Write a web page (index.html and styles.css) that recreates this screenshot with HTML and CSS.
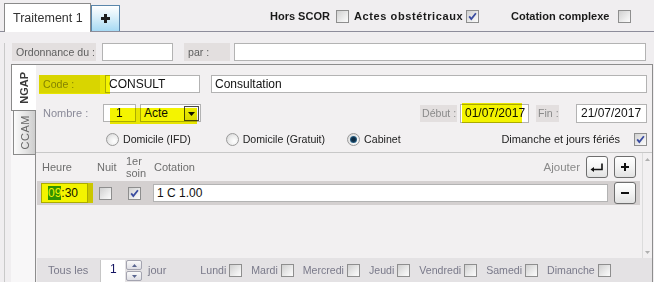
FILE: index.html
```html
<!DOCTYPE html>
<html lang="fr">
<head>
<meta charset="utf-8">
<title>Traitement</title>
<link rel="stylesheet" href="styles.css">
</head>
<body>
<div class="top">
  <div class="tab tab-active">Traitement 1</div>
  <div class="tab tab-add"><svg width="9" height="9" viewBox="0 0 9 9"><path d="M3 0h3v3h3v3H6v3H3V6H0V3h3z" fill="#1e1e1e"/></svg></div>
  <div class="opts">
    <span class="opt-l l1">Hors SCOR</span><span class="cb"></span>
    <span class="opt-l l2">Actes obstétricaux</span><span class="cb"><svg width="11" height="11" viewBox="0 0 11 11"><path d="M2.2 5.4l2.1 2.6 4.6-5.8" fill="none" stroke="#3a4ca0" stroke-width="1.8"/></svg></span>
    <span class="opt-l l3">Cotation complexe</span><span class="cb"></span>
  </div>
</div>
<div class="content">
  <div class="ordrow">
    <span class="lbox lb-ord">Ordonnance du :</span>
    <span class="field f-ord"></span>
    <span class="lbox lb-par">par :</span>
    <span class="field f-par"></span>
  </div>
  <div class="frame">
    <div class="vtabs">
      <div class="vtab ngap"><span>NGAP</span></div>
      <div class="vtab ccam"><span>CCAM</span></div>
    </div>
    <div class="panel">
      <div class="row r-code">
        <span class="lbox code-lbl">Code :</span>
        <span class="field f-code">CONSULT</span>
        <span class="field f-lib">Consultation</span>
        <span class="hl hl-code"></span>
      </div>
      <div class="row r-nb">
        <span class="lbl nb-lbl">Nombre :</span>
        <span class="field f-nb">1</span>
        <span class="field select">Acte<span class="dd"><svg width="7" height="4" viewBox="0 0 7 4"><path d="M0 0h7L3.5 4z" fill="#111"/></svg></span></span>
        <span class="lbox lb-deb">Début :</span>
        <span class="field f-date">01/07/2017</span>
        <span class="lbox lb-fin">Fin :</span>
        <span class="field f-date2">21/07/2017</span>
        <span class="hl hl-nb"></span>
        <span class="hl hl-deb"></span>
      </div>
      <div class="row r-rad">
        <span class="radio r1"></span><span class="rtxt">Domicile (IFD)</span>
        <span class="radio r2"></span><span class="rtxt">Domicile (Gratuit)</span>
        <span class="radio r3 on"><span class="dot"></span></span><span class="rtxt">Cabinet</span>
        <span class="rtxt dim">Dimanche et jours fériés</span>
        <span class="cb cb-dim"><svg width="11" height="11" viewBox="0 0 11 11"><path d="M2.2 5.4l2.1 2.6 4.6-5.8" fill="none" stroke="#3a4ca0" stroke-width="1.8"/></svg></span>
      </div>
      <div class="sep"></div>
      <div class="grid">
        <div class="gmain">
          <div class="ghead">
            <span class="h-heure">Heure</span>
            <span class="h-nuit">Nuit</span>
            <span class="h-soin">1er<br>soin</span>
            <span class="h-cot">Cotation</span>
            <span class="ajouter">Ajouter</span>
            <span class="btn b-enter"><svg width="20" height="20" viewBox="0 0 20 20"><path d="M15 6.5v6H6" fill="none" stroke="#111" stroke-width="1.6"/><path d="M3.5 12.5L7 10v5z" fill="#111"/></svg></span>
            <span class="btn b-plus"><svg width="20" height="20" viewBox="0 0 20 20"><path d="M9 6h2v3h3v2h-3v3H9v-3H6V9h3z" fill="#111"/></svg></span>
          </div>
          <div class="grow">
            <span class="field f-heure"><span class="sel">09</span>:30</span>
            <span class="cb cb-nuit"></span>
            <span class="cb cb-soin"><svg width="11" height="11" viewBox="0 0 11 11"><path d="M2.2 5.4l2.1 2.6 4.6-5.8" fill="none" stroke="#3a4ca0" stroke-width="1.8"/></svg></span>
            <span class="field f-cot">1 C 1.00</span>
            <span class="btn b-minus"><svg width="20" height="20" viewBox="0 0 20 20"><path d="M6 9h8v2H6z" fill="#111"/></svg></span>
            <span class="hl hl-heure"></span>
          </div>
        </div>
        <div class="vscroll">
          <svg width="5" height="3" viewBox="0 0 5 3"><path d="M0 3L2.5 0 5 3z" fill="#b0b0b0"/></svg>
          <svg width="5" height="3" viewBox="0 0 5 3"><path d="M0 0h5L2.5 3z" fill="#b0b0b0"/></svg>
        </div>
      </div>
      <div class="bottom">
        <span class="b-tous">Tous les</span>
        <span class="spin">
          <span class="spin-f">1</span>
          <span class="spin-b">
            <span class="sb"><svg width="5" height="3" viewBox="0 0 5 3"><path d="M0 3L2.5 0 5 3z" fill="#5a6690"/></svg></span>
            <span class="sb"><svg width="5" height="3" viewBox="0 0 5 3"><path d="M0 0h5L2.5 3z" fill="#5a6690"/></svg></span>
          </span>
        </span>
        <span class="b-jour">jour</span>
        <span class="day d-first">Lundi</span><span class="cb"></span>
        <span class="day">Mardi</span><span class="cb"></span>
        <span class="day">Mercredi</span><span class="cb"></span>
        <span class="day">Jeudi</span><span class="cb"></span>
        <span class="day">Vendredi</span><span class="cb"></span>
        <span class="day">Samedi</span><span class="cb"></span>
        <span class="day">Dimanche</span><span class="cb"></span>
      </div>
    </div>
  </div>
</div>
</body>
</html>
```

FILE: styles.css
```css
* { box-sizing: border-box; }
html, body { margin: 0; padding: 0; }
body {
  width: 654px;
  height: 282px;
  overflow: hidden;
  background: #f0eef0;
  font-family: "Liberation Sans", Arial, sans-serif;
  font-size: 11px;
  color: #222;
  white-space: nowrap;
}

/* top tab bar */
.top {
  height: 32px;
  border-bottom: 1px solid #8d8d9b;
  display: flex;
  align-items: flex-end;
  padding-left: 4px;
}
.tab { display: flex; align-items: center; }
.tab-active {
  width: 87px;
  height: 29px;
  margin-bottom: -1px;
  padding-left: 8px;
  padding-bottom: 1px;
  background: #fff;
  border: 1px solid #8a8a8a;
  border-bottom: none;
  font-size: 12.5px;
  color: #333;
}
.tab-add {
  width: 29px;
  height: 26px;
  justify-content: center;
  border: 1px solid #5a86ab;
  border-bottom: none;
  background: linear-gradient(#ffffff, #e3f3fb 35%, #a6daf4);
}
.opts {
  margin-left: auto;
  align-self: center;
  margin-top: 1px;
  display: flex;
  align-items: center;
  padding-right: 23px;
  font-weight: bold;
  color: #1a1a1a;
}
.opt-l { display: inline-block; }
.l1 { width: 66px; }
.l2 { width: 112px; margin-left: 5px; letter-spacing: 0.6px; }
.l3 { width: 107px; margin-left: 32px; }

/* checkbox */
.cb {
  width: 13px;
  height: 13px;
  flex: none;
  display: inline-flex;
  align-items: center;
  justify-content: center;
  border: 1px solid #8e8e8e;
  background: linear-gradient(135deg, #d0d0d0, #f0f0f0 70%, #fbfbfb);
}

/* content */
.content {
  margin-left: 4px;
  border-left: 1px solid #c9c9c9;
  height: 250px;
}
.ordrow {
  display: flex;
  height: 18px;
  margin: 11px 8px 0 7px;
}
.lbox {
  display: flex;
  align-items: center;
  padding: 0 3px;
  background: #e3dfdf;
  color: #5e5e5e;
  flex: none;
  font-size: 10.6px;
  overflow: visible;
}
.field {
  display: flex;
  align-items: center;
  background: #fff;
  border: 1px solid #b3b3b3;
  font-size: 12px;
  color: #111;
  padding-left: 3px;
  flex: none;
}
.lb-ord { width: 84px; padding-left: 4px; }
.f-ord { width: 71px; margin-left: 6px; }
.lb-par { width: 46px; margin-left: 11px; padding-left: 4px; }
.f-par { flex: 1; margin-left: 4px; }

.frame {
  display: flex;
  margin-top: 3px;
  margin-left: 6px;
  height: 218px;
}
.vtabs {
  width: 24px;
  flex: none;
  background: #f8f7f8;
  position: relative;
  z-index: 2;
}
.vtab {
  display: flex;
  align-items: center;
  justify-content: center;
  border: 1px solid #8a8a8a;
  border-right: none;
}
.vtab span {
  writing-mode: vertical-rl;
  transform: rotate(180deg);
}
.ngap {
  width: 25px;
  height: 47px;
  background: #fff;
  font-weight: bold;
  color: #3a3a3a;
}
.ccam {
  width: 22px;
  height: 44px;
  margin-left: 2px;
  border-top: none;
  background: linear-gradient(to right, #fbfbfb, #e6e6e6 50%, #cdcdcd);
  color: #666;
  letter-spacing: 0.5px;
}

.panel {
  flex: 1;
  margin-right: 1px;
  border: 1px solid #8d8d8d;
  border-bottom: none;
  background: #f2f0f1;
  display: flex;
  flex-direction: column;
  position: relative;
}
.row {
  display: flex;
  align-items: center;
  position: relative;
  flex: none;
}
.hl {
  position: absolute;
  background: #f4f400;
  mix-blend-mode: multiply;
  pointer-events: none;
}

.r-code { margin-top: 10px; height: 18px; padding-left: 3px; }
.code-lbl { width: 61px; height: 18px; color: #8a8a8a; padding-left: 4px; }
.f-code { width: 95px; height: 18px; margin-left: 5px; }
.f-lib { flex: 1; height: 18px; margin-left: 11px; margin-right: 5px; }
.hl-code { left: 3px; top: 0; width: 71px; height: 19px; }

.r-nb { margin-top: 11px; height: 18px; }
.nb-lbl { width: 60px; margin-left: 7px; color: #8a8a98; }
.f-nb { width: 33px; height: 18px; padding-left: 12px; }
.select { width: 61px; height: 18px; margin-left: 4px; position: relative; padding-left: 3px; }
.dd {
  position: absolute;
  right: 1px;
  top: 1px;
  width: 15px;
  height: 15px;
  border: 1px solid #4a4a4a;
  background: linear-gradient(#fbfbfb, #e4e4e4);
  display: flex;
  align-items: center;
  justify-content: center;
}
.lb-deb { width: 37px; height: 17px; margin-left: auto; padding: 0 1px 0 2px; color: #8a8a8a; }
.f-date { width: 69px; height: 19px; margin-left: 3px; padding-left: 4px; }
.lb-fin { width: 23px; height: 17px; margin-left: 7px; padding: 0 1px 0 2px; color: #8a8a8a; }
.f-date2 { width: 71px; height: 19px; margin-left: 17px; margin-right: 5px; padding-left: 4px; }
.hl-nb { left: 74px; top: 4px; width: 87px; height: 16px; }
.hl-deb { left: 426px; top: -1px; width: 60px; height: 20px; }

.r-rad { margin-top: 9px; height: 16px; }
.radio {
  width: 13px;
  height: 13px;
  flex: none;
  border-radius: 50%;
  border: 1px solid #9a9a9a;
  background: radial-gradient(circle at 65% 65%, #ffffff, #ececec 50%, #cfcfcf);
  display: flex;
  align-items: center;
  justify-content: center;
}
.r1 { margin-left: 70px; }
.r2 { margin-left: 35px; }
.r3 { margin-left: 22px; }
.dot {
  width: 7px;
  height: 7px;
  border-radius: 50%;
  background: radial-gradient(circle, #0e2c44 35%, #2f6f98 75%, #7fb4d4);
}
.rtxt { margin-left: 4px; color: #222; font-size: 10.6px; }
.dim { margin-left: auto; font-size: 11px; }
.cb-dim { margin-left: 14px; margin-right: 5px; }

.sep { height: 1px; margin-top: 5px; background: #c8c8c8; flex: none; }

.grid { flex: 1; display: flex; min-height: 0; }
.gmain { flex: 1; display: flex; flex-direction: column; }
.ghead {
  height: 28px;
  display: flex;
  align-items: center;
  padding-left: 6px;
  padding-right: 6px;
  color: #6e6e6e;
}
.h-heure { width: 55px; }
.h-nuit { width: 29px; }
.h-soin { width: 28px; line-height: 12px; }
.h-cot { flex: 1; }
.ajouter { color: #8a8a8a; font-size: 11.5px; }
.btn {
  width: 22px;
  height: 22px;
  flex: none;
  border: 1px solid #6e6e6e;
  border-radius: 3px;
  background: linear-gradient(#ffffff, #f4f4f4 50%, #e2e2e2);
  display: flex;
  align-items: center;
  justify-content: center;
}
.b-enter { margin-left: 6px; }
.b-plus { margin-left: 6px; }

.grow {
  height: 24px;
  margin: 0 2px 0 1px;
  background: #d4d0d0;
  display: flex;
  align-items: center;
  position: relative;
}
.f-heure { width: 47px; height: 20px; margin-left: 4px; padding-left: 6px; }
.sel { background: #3399ff; color: #fff; }
.cb-nuit { margin-left: 11px; }
.cb-soin { margin-left: 16px; }
.f-cot { flex: 1; height: 18px; margin-left: 12px; padding-left: 3px; }
.b-minus { margin-left: 6px; margin-right: 4px; }
.hl-heure { left: 4px; top: 2px; width: 52px; height: 20px; }

.vscroll {
  width: 10px;
  flex: none;
  border-left: 1px solid #dcdcdc;
  display: flex;
  flex-direction: column;
  justify-content: space-between;
  align-items: center;
  padding: 5px 0 4px;
}

.bottom {
  height: 24px;
  flex: none;
  margin-left: 1px;
  background: #e4e2e4;
  display: flex;
  align-items: center;
  color: #7a7a8a;
}
.b-tous { width: 52px; margin-left: 11px; }
.spin { display: flex; align-self: flex-end; height: 22px; }
.spin-f {
  width: 25px;
  background: #fff;
  border-left: 1px solid #c6c6c6;
  color: #141462;
  font-size: 12px;
  padding-left: 9px;
  padding-top: 2px;
}
.spin-b { display: flex; flex-direction: column; gap: 1px; margin-left: 1px; }
.sb {
  width: 16px;
  height: 10px;
  border: 1px solid #a4a4b0;
  border-radius: 2px;
  background: linear-gradient(#fafafa, #dedee4);
  display: flex;
  align-items: center;
  justify-content: center;
}
.b-jour { margin-left: 6px; margin-right: 34px; }
.day { margin-left: 9px; font-size: 10.6px; }
.d-first { margin-left: 0; }
.bottom .cb { margin-left: 3px; }
```
